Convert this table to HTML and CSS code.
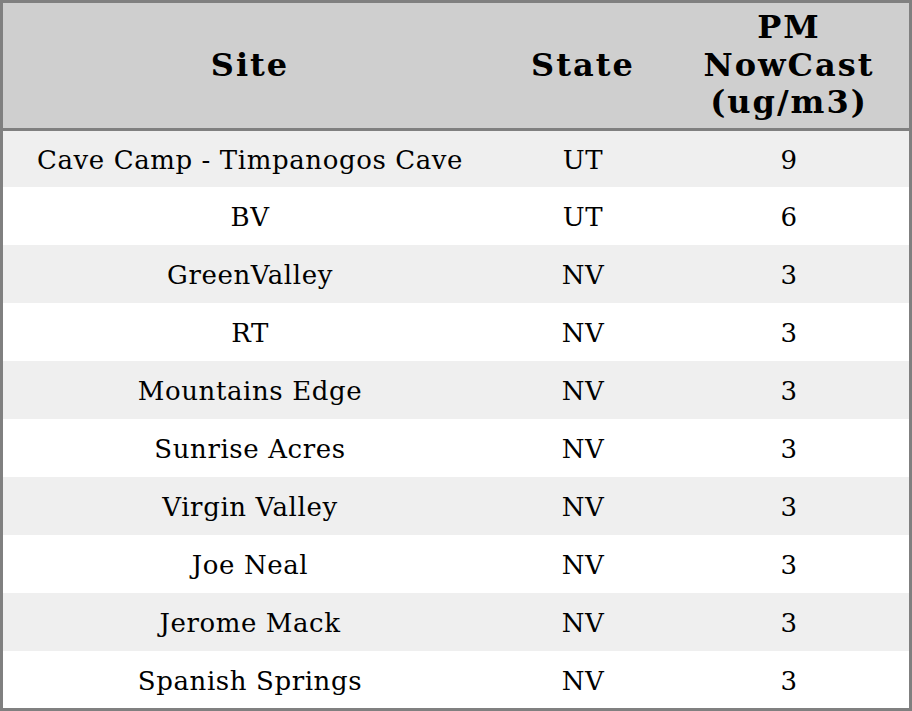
FILE: index.html
```html
<!DOCTYPE html>
<html>
<head>
<meta charset="utf-8">
<link rel="stylesheet" href="styles.css">
</head>
<body>
<table class="data">
  <thead>
    <tr>
      <th class="col-site">Site</th>
      <th class="col-state">State</th>
      <th class="col-pm">PM<br>NowCast<br>(ug/m3)</th>
    </tr>
  </thead>
  <tbody>
    <tr class="first"><td>Cave Camp - Timpanogos Cave</td><td>UT</td><td>9</td></tr>
    <tr><td>BV</td><td>UT</td><td>6</td></tr>
    <tr><td>GreenValley</td><td>NV</td><td>3</td></tr>
    <tr><td>RT</td><td>NV</td><td>3</td></tr>
    <tr><td>Mountains Edge</td><td>NV</td><td>3</td></tr>
    <tr><td>Sunrise Acres</td><td>NV</td><td>3</td></tr>
    <tr><td>Virgin Valley</td><td>NV</td><td>3</td></tr>
    <tr><td>Joe Neal</td><td>NV</td><td>3</td></tr>
    <tr><td>Jerome Mack</td><td>NV</td><td>3</td></tr>
    <tr class="last"><td>Spanish Springs</td><td>NV</td><td>3</td></tr>
  </tbody>
</table>
</body>
</html>
```

FILE: styles.css
```css
html, body {
  margin: 0;
  padding: 0;
  background: #ffffff;
}

.data {
  width: 912px;
  border-collapse: separate;
  border-spacing: 0;
  border: 3px solid #808080;
  font-family: "DejaVu Serif", serif;
  color: #000000;
  table-layout: fixed;
}

.data th {
  background: #cfcfcf;
  font-size: 32px;
  font-weight: bold;
  letter-spacing: 2px;
  line-height: 37.5px;
  height: 125px;
  padding: 0;
  text-align: center;
  vertical-align: middle;
  border-bottom: 3px solid #808080;
}

.col-site { width: 494px; }
.col-state { width: 172px; }
.col-pm { width: 240px; }

.data td {
  font-size: 26px;
  letter-spacing: 0.6px;
  height: 56px;
  padding: 2px 0 0 0;
  text-align: center;
  vertical-align: middle;
  line-height: 30px;
}

.data tbody tr:nth-child(odd) td {
  background: #efefef;
}

.data tr.first td {
  height: 54px;
}

.data tr.last td {
  height: 55px;
}
```
